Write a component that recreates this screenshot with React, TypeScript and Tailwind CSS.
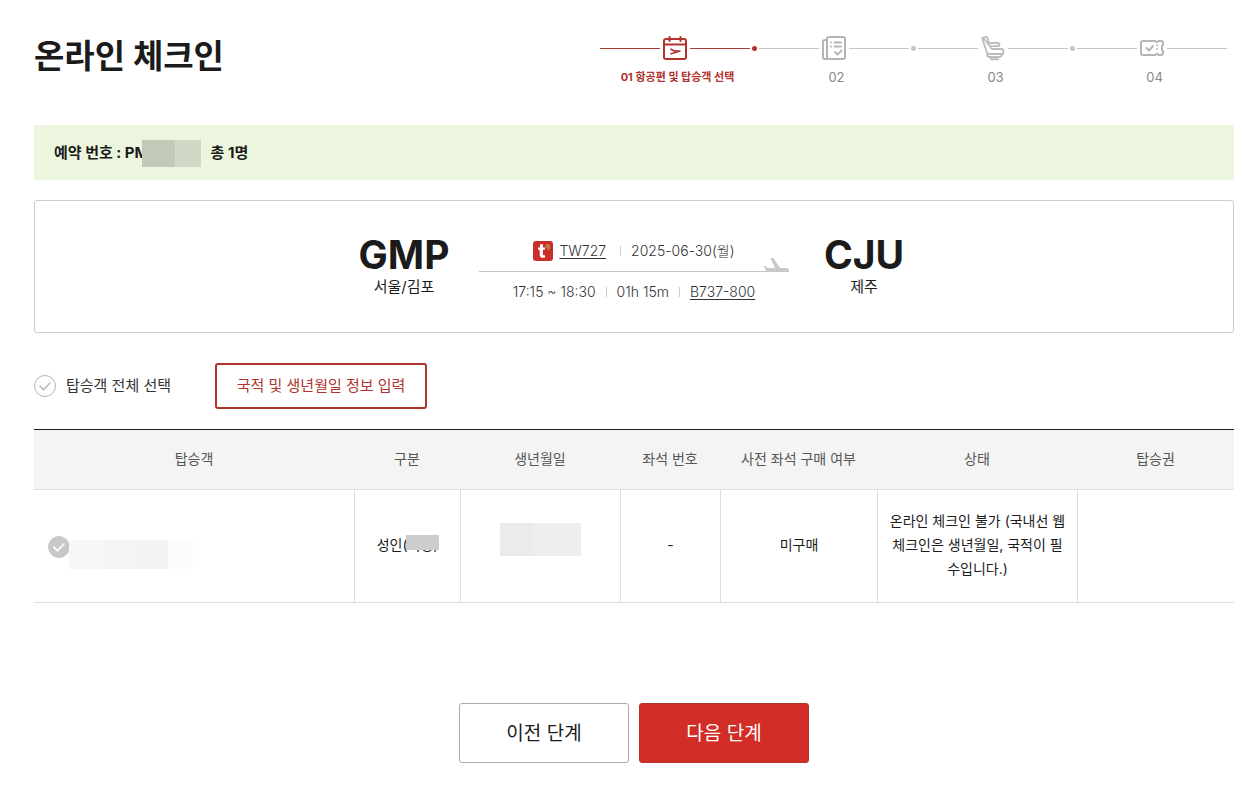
import React from 'react';

const StepLine: React.FC<{ active?: boolean }> = ({ active }) => (
  <span className={`h-px w-[60px] ${active ? 'bg-[#a83a34]' : 'bg-[#c6c6c6]'}`} />
);

const CalendarIcon = () => (
  <svg width="26" height="26" viewBox="0 0 26 26" fill="none" stroke="#b0332d" strokeWidth="2" strokeLinecap="round" strokeLinejoin="round">
    <rect x="2" y="4" width="22" height="20" rx="2" />
    <path d="M2 9.500h22M7.500 2V6M18.500 2V6" />
    <path d="M9 14.200l3.500 1.800M9 18.800l3.500-1 5.500-1.800h-5" strokeWidth="1.600" />
  </svg>
);

const DocumentIcon = () => (
  <svg width="26" height="26" viewBox="0 0 26 26" fill="none" stroke="#b5b5b5" strokeWidth="2" strokeLinecap="round" strokeLinejoin="round">
    <rect x="6" y="2" width="18" height="22" rx="2" />
    <path d="M6 5H4a2 2 0 0 0-2 2v15a2 2 0 0 0 2 2h4" />
    <path d="M13.500 7.500H20M13.500 11.500H20M14 17l2.500 2.500 4-4" strokeWidth="1.800" />
    <path d="M10 7.500h.1M10 11.500h.1" />
  </svg>
);

const SeatIcon = () => (
  <svg width="26" height="26" viewBox="0 0 26 26" fill="none" stroke="#bdbdbd" strokeWidth="1.800" strokeLinejoin="round" strokeLinecap="round">
    <path d="M3 2.600l3-.8c.7-.2 1.200.1 1.400.8L9 8.200M10.200 11.500l.5 1.300c.3.800.8 1.200 1.600 1.200h9.400c1 0 1.600.6 1.600 1.500V19H9.200c-1.300 0-2.100-.6-2.500-1.900L2.300 3.800c-.2-.6.1-1 .7-1.200z" />
    <path d="M9 8h8.800c2.200 0 2.200 3.200 0 3.200h-7.600" />
    <path d="M7 19.200c.2 1.900.9 2.800 2.200 2.800h10.500c1.300 0 2-.9 2.300-2.800" />
    <path d="M10.800 24.200h7.200" strokeWidth="2" />
  </svg>
);

const TicketIcon = () => (
  <svg width="26" height="26" viewBox="0 0 26 26" fill="none" stroke="#b5b5b5" strokeWidth="2" strokeLinecap="round" strokeLinejoin="round">
    <path d="M4 6h12.500c.4 1.300 2.600 1.300 3 0H22a2 2 0 0 1 2 2v2l-1 1v4l1 1v2a2 2 0 0 1-2 2h-2.500c-.4-1.300-2.600-1.300-3 0H4a2 2 0 0 1-2-2V8a2 2 0 0 1 2-2z" />
    <path d="M7.500 13l2.500 2.500 4-4.500" />
    <path d="M18 9.500v8" strokeDasharray="1.500 2.200" strokeLinecap="butt" />
  </svg>
);

const AirlineLogo = () => (
  <svg width="20" height="20" viewBox="0 0 20 20">
    <rect width="20" height="20" rx="3" fill="#cb2d2a" />
    <path d="M7 3.500l2.900-.5v3.500h2v2.300h-2v4.200c0 1.200.7 1.600 2.100 1.200v2.200c-3.300 1-5.300.1-5.300-2.700V8.800H5V6.500h2v-3z" fill="#fff" />
    <path d="M14.500 3c1.700 0 2.800 1 2.800 2.600 0 2.200-1.400 4-3.500 4.900.9-1.200 1.200-1.900 1.200-2.700-1.600 0-2.700-.9-2.700-2.400S13 3 14.500 3z" fill="#b98243" />
  </svg>
);

const PlaneIcon = () => (
  <svg className="absolute right-0 -bottom-px" width="26" height="14" viewBox="0 0 26 14" fill="#c9c9c9">
    <path d="M7.500 0h2.800L17 10h6.500c1.600 0 2.500 1 2.500 2.200 0 .8-.4 1.300-1.200 1.300H4.500c-1 0-1.500-.5-1.900-1.400L.5 8h2l2 2H12L7.500 0z" />
  </svg>
);

const steps = [
  { label: '01 항공편 및 탑승객 선택', icon: <CalendarIcon />, active: true },
  { label: '02', icon: <DocumentIcon /> },
  { label: '03', icon: <SeatIcon /> },
  { label: '04', icon: <TicketIcon /> }
];

const Steps = () => (
  <ol className="flex shrink-0">
    {steps.map(({ label, icon, active }, index) => (
      <li key={label} className="w-[159px]">
        <div className="flex h-[26px] items-center">
          <StepLine active={active} />
          <span className="flex w-[30px] justify-center">{icon}</span>
          <StepLine active={active} />
          {index < steps.length - 1 && (
            <span className="flex w-[9px] justify-center">
              <span className={`size-[5px] rounded-full ${active ? 'bg-[#b0332d]' : 'bg-[#c6c6c6]'}`} />
            </span>
          )}
        </div>
        <p
          className={`mt-1.5 pr-1 text-center leading-5 whitespace-nowrap ${
            active ? 'text-[11px] font-bold text-[#b0332d]' : 'text-[13px] text-[#888]'
          }`}
        >
          {label}
        </p>
      </li>
    ))}
  </ol>
);

interface RoundCheckProps {
  id: string;
  disabled?: boolean;
  label?: string;
}

const RoundCheck: React.FC<RoundCheckProps> = ({ id, disabled, label }) => (
  <span className="relative flex size-[22px] shrink-0">
    <input
      id={id}
      type="checkbox"
      aria-label={label}
      disabled={disabled}
      className="size-[22px] appearance-none rounded-full border border-[#b5b5b5] disabled:border-[#c8c8c8] disabled:bg-[#c8c8c8]"
    />
    <svg
      className="pointer-events-none absolute inset-0"
      width="22"
      height="22"
      viewBox="0 0 22 22"
      fill="none"
      stroke={disabled ? '#fff' : '#b5b5b5'}
      strokeWidth={disabled ? 1.8 : 1.3}
    >
      <path d="M5.500 10.800l4 4 7-7.300" />
    </svg>
  </span>
);

const Divider = () => <span className="h-2.5 w-px bg-[#ccc]" />;

const Airport: React.FC<{ code: string; city: string }> = ({ code, city }) => (
  <div className="w-[150px] text-center text-[#1b1b1b]">
    <p className="text-[39px] leading-10 font-bold">{code}</p>
    <p className="text-[15px] leading-6">{city}</p>
  </div>
);

const FlightCard = () => (
  <section className="mt-5 flex h-[133px] items-center justify-center rounded-[3px] border border-[#ccc]">
    <Airport code="GMP" city="서울/김포" />
    <div className="w-[310px] pt-2.5 text-sm font-light text-[#333]">
      <div className="relative flex h-[41px] items-center justify-center border-b border-[#c6c6c6]">
        <AirlineLogo />
        <a href="#flight" className="mr-3.5 ml-1.5 underline underline-offset-2">TW727</a>
        <Divider />
        <span className="ml-2.5">2025-06-30(월)</span>
        <PlaneIcon />
      </div>
      <div className="flex h-10 items-center justify-center gap-2.5">
        <span>17:15 ~ 18:30</span>
        <Divider />
        <span>01h 15m</span>
        <Divider />
        <a href="#aircraft" className="underline underline-offset-2">B737-800</a>
      </div>
    </div>
    <Airport code="CJU" city="제주" />
  </section>
);

const columns = ['탑승객', '구분', '생년월일', '좌석 번호', '사전 좌석 구매 여부', '상태', '탑승권'];

const PassengerTable = () => (
  <table className="mt-5 w-full table-fixed border-separate border-spacing-0 border-t border-[#1b1b1b] text-center text-sm">
    <colgroup>
      <col />
      <col className="w-[106px]" />
      <col className="w-[160px]" />
      <col className="w-[100px]" />
      <col className="w-[157px]" />
      <col className="w-[200px]" />
      <col className="w-[157px]" />
    </colgroup>
    <thead>
      <tr className="h-[60px] bg-[#f4f4f4] text-[#555]">
        {columns.map((column) => (
          <th key={column} scope="col" className="border-b border-[#ddd] pb-0.5 font-normal">
            {column}
          </th>
        ))}
      </tr>
    </thead>
    <tbody>
      <tr className="h-[113px] leading-6 text-[#1b1b1b] *:border-b *:border-[#ddd]">
        <td className="px-3.5 pt-0.5">
          <div className="relative flex">
            <RoundCheck id="passenger-1" label="탑승객 1" disabled />
            <span className="absolute top-1 left-[21px] flex h-[29px]">
              <span className="w-[33px] bg-[#f7f7f7]" />
              <span className="w-[33px] bg-[#f5f5f3]" />
              <span className="w-[33px] bg-[#f3f3f3]" />
              <span className="w-[25px] bg-[#fbfbfb]" />
            </span>
          </div>
        </td>
        <td className="border-l pb-0.5">
          <span className="relative">
            성인(여성)
            <span className="absolute -top-px -right-px h-[15px] w-[33px] bg-[#cbcdcc]" />
          </span>
        </td>
        <td className="border-l pb-0.5">
          <div className="mx-auto mb-3 flex h-[33px] w-[81px]">
            <span className="w-[33px] bg-[#ebebeb]" />
            <span className="flex-1 bg-[#eee]" />
          </div>
        </td>
        <td className="border-l pb-0.5">-</td>
        <td className="border-l pb-0.5">미구매</td>
        <td className="border-l px-2.5 pb-0.5 break-all">
          온라인 체크인 불가 (국내선 웹 체크인은 생년월일, 국적이 필수입니다.)
        </td>
        <td className="border-l" />
      </tr>
    </tbody>
  </table>
);

export default function App() {
  return (
    <div className="min-h-screen bg-white pb-11 font-['Inter','Noto_Sans_CJK_KR',sans-serif]" lang="ko">
      <header className="flex justify-between pt-[35px] pr-[18px] pl-[34px]">
        <h1 className="text-[33px] leading-[42px] font-bold text-[#1b1b1b]">온라인 체크인</h1>
        <Steps />
      </header>

      <main className="mt-[38px] pr-5 pl-[34px]">
        <div className="flex h-[55px] items-center bg-[#ecf6de] px-5 pt-0.5 text-[15px] font-bold text-[#1b1b1b]">
          <span>예약 번호 : PM</span>
          <span className="z-10 -ml-[7px] flex h-[27px]">
            <span className="w-[33px] bg-[#c2c9b7]" />
            <span className="w-[26px] bg-[#d0d9c6]" />
          </span>
          <span className="ml-2.5">총 1명</span>
        </div>

        <FlightCard />

        <div className="mt-[30px] flex items-center text-[15px]">
          <RoundCheck id="passenger-all" />
          <label htmlFor="passenger-all" className="ml-2.5 text-[#333]">탑승객 전체 선택</label>
          <button type="button" className="ml-11 h-[46px] w-[212px] rounded-[3px] border-2 border-[#b0332d] text-[#b0332d]">
            국적 및 생년월일 정보 입력
          </button>
        </div>

        <PassengerTable />

        <div className="mt-[100px] flex justify-center gap-2.5 text-[19px]">
          <button type="button" className="h-[60px] w-[170px] rounded-[3px] border border-[#aaa] pt-0.5 text-[#1b1b1b]">
            이전 단계
          </button>
          <button type="button" className="h-[60px] w-[170px] rounded-[3px] border border-[#b0332d] bg-[#d22d27] pt-0.5 text-white">
            다음 단계
          </button>
        </div>
      </main>
    </div>
  );
}
